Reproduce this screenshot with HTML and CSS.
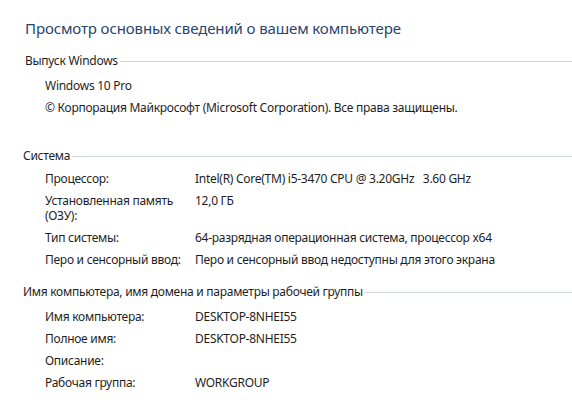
FILE: index.html
```html
<!DOCTYPE html>
<html lang="ru">
<head>
<meta charset="utf-8">
<title>Система</title>
<link rel="stylesheet" href="styles.css">
</head>
<body>
<div class="page">
  <h1 class="title">Просмотр основных сведений о вашем компьютере</h1>

  <div class="group group-edition">
    <div class="group-head"><span>Выпуск Windows</span></div>
    <div class="rows">
      <div class="line">Windows 10 Pro</div>
      <div class="line">© Корпорация Майкрософт (Microsoft Corporation). Все права защищены.</div>
    </div>
  </div>

  <div class="group group-system">
    <div class="group-head"><span>Система</span></div>
    <div class="rows">
      <div class="row"><div class="key">Процессор:</div><div class="val">Intel(R) Core(TM) i5-3470 CPU @ 3.20GHz&nbsp;&nbsp; 3.60 GHz</div></div>
      <div class="row"><div class="key">Установленная память (ОЗУ):</div><div class="val">12,0 ГБ</div></div>
      <div class="row"><div class="key">Тип системы:</div><div class="val">64-разрядная операционная система, процессор x64</div></div>
      <div class="row"><div class="key">Перо и сенсорный ввод:</div><div class="val">Перо и сенсорный ввод недоступны для этого экрана</div></div>
    </div>
  </div>

  <div class="group group-name">
    <div class="group-head"><span>Имя компьютера, имя домена и параметры рабочей группы</span></div>
    <div class="rows">
      <div class="row"><div class="key">Имя компьютера:</div><div class="val">DESKTOP-8NHEI55</div></div>
      <div class="row"><div class="key">Полное имя:</div><div class="val">DESKTOP-8NHEI55</div></div>
      <div class="row"><div class="key">Описание:</div><div class="val"></div></div>
      <div class="row"><div class="key">Рабочая группа:</div><div class="val">WORKGROUP</div></div>
    </div>
  </div>
</div>
</body>
</html>
```

FILE: styles.css
```css
html, body { margin: 0; padding: 0; background: #fff; }
body { font-family: "Noto Sans", "Open Sans", sans-serif; font-size: 12px; letter-spacing: -0.27px; color: #1e1e1e; }

.page { padding: 18px 0 0 25px; width: 547px; }

.title { margin: 0; font-size: 15px; font-weight: normal; line-height: 20px; letter-spacing: -0.12px; color: #27456f; }

.group-head { display: flex; align-items: center; line-height: 15px; }
.group-head span { white-space: nowrap; padding-right: 2px; }
.group-head::after { content: ""; flex: 1; height: 1px; background: #cfd5da; margin-top: 2px; }

.rows { display: flex; flex-direction: column; gap: 7px; padding-left: 20px; }
.line { line-height: 15px; }
.row { display: grid; grid-template-columns: 150px 1fr; line-height: 15px; }
.key { padding-right: 6px; }

.group-edition { margin-top: 15px; }
.group-edition .rows { margin-top: 10px; }
.group-system { margin-top: 33px; }
.group-system .group-head span { margin-left: -2px; }
.group-system .rows { margin-top: 8px; }
.group-name { margin-top: 17px; }
.group-name .group-head span { margin-left: -2px; }
.group-name .rows { margin-top: 10px; }
```
